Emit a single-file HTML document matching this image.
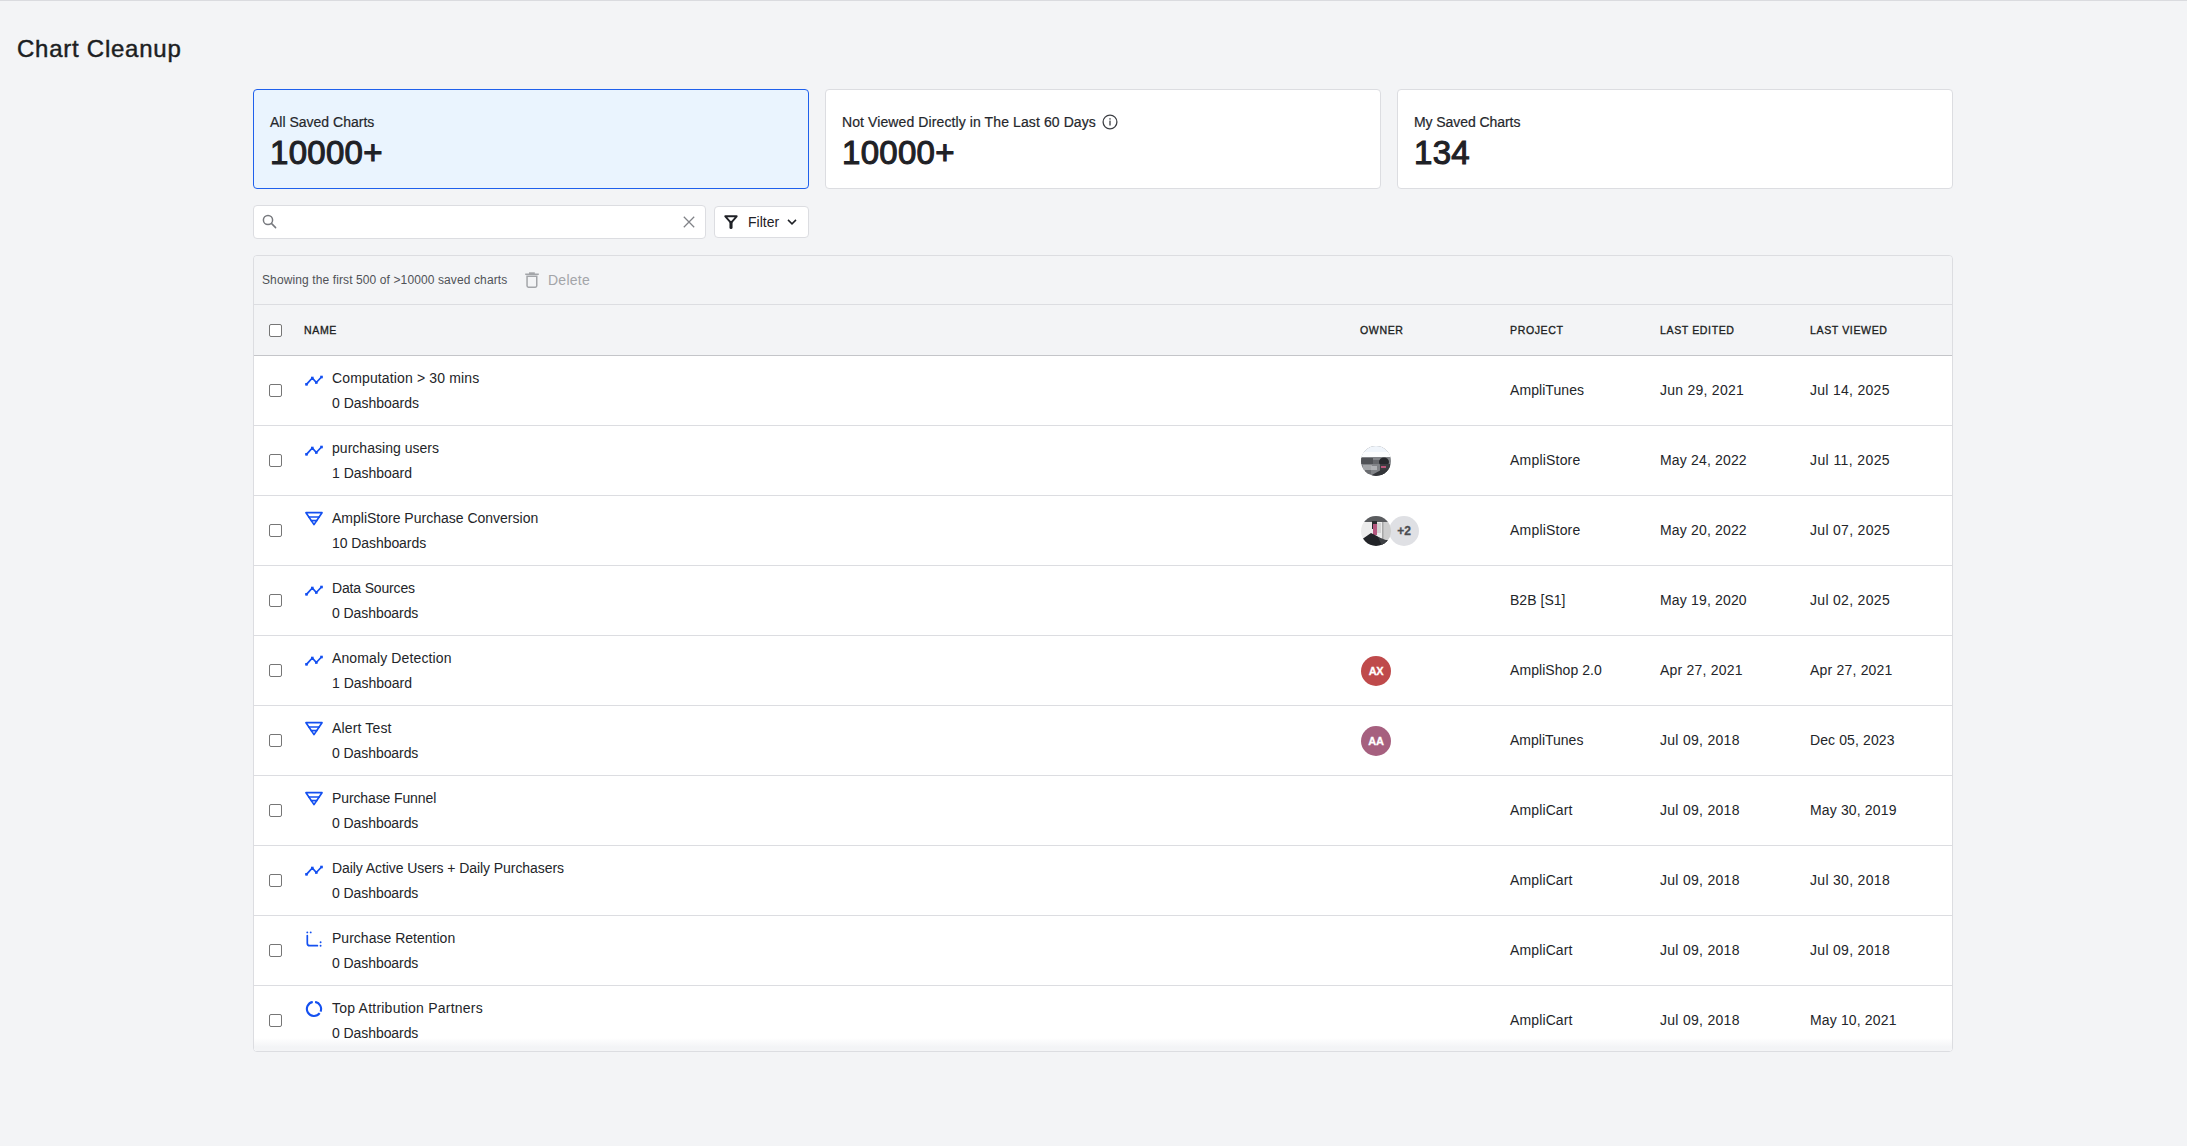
<!DOCTYPE html>
<html>
<head>
<meta charset="utf-8">
<style>
*{box-sizing:border-box;}
html,body{margin:0;padding:0;}
body{width:2187px;height:1146px;overflow:hidden;background:#f3f4f6;position:relative;font-family:"Liberation Sans",sans-serif;color:#232529;}

.abs{position:absolute;}
.t{position:absolute;white-space:nowrap;line-height:16px;}
.topline{left:0;top:0;width:2187px;height:1px;background:#dadbdf;}
.title{left:17px;top:35px;font-size:24px;line-height:28px;letter-spacing:0.75px;color:#1c1e22;-webkit-text-stroke:0.45px #1c1e22;}
.card{position:absolute;top:89px;width:556px;height:100px;background:#fff;border:1px solid #dcdde1;border-radius:4px;}
.card.sel{background:#eaf4fe;border-color:#1f60ec;}
.card .lbl{position:absolute;left:16px;top:24px;font-size:14px;line-height:16px;color:#25272c;-webkit-text-stroke:0.2px #25272c;white-space:nowrap;}
.card .num{position:absolute;left:16px;top:44px;font-size:33px;line-height:37px;font-weight:normal;letter-spacing:0.3px;color:#1f2126;-webkit-text-stroke:1.1px #1f2126;white-space:nowrap;}
.info{position:absolute;left:276px;top:24px;width:16px;height:16px;}
.search{left:253px;top:205px;width:453px;height:34px;background:#fff;border:1px solid #dcdde1;border-radius:4px;}
.sic{position:absolute;left:6px;top:6px;width:20px;height:20px;}
.xic{position:absolute;left:429px;top:10px;width:12px;height:12px;}
.filter{left:714px;top:206px;width:95px;height:32px;background:#fff;border:1px solid #dcdde1;border-radius:4px;}
.fic{position:absolute;left:9px;top:8px;width:14px;height:14px;}
.ftxt{position:absolute;left:33px;top:7px;font-size:14px;line-height:16px;color:#1f2126;}
.chev{position:absolute;left:72px;top:12px;width:10px;height:6px;}
.table{left:253px;top:255px;width:1700px;height:797px;border:1px solid #dcdde1;border-radius:4px;overflow:hidden;background:#f3f4f6;}
.toolbar{position:absolute;left:0;top:0;width:1698px;height:49px;border-bottom:1px solid #dcdde1;background:#f3f4f6;}
.show{position:absolute;left:8px;top:17px;font-size:12px;line-height:14px;letter-spacing:0.11px;color:#505257;white-space:nowrap;}
.trash{position:absolute;left:271px;top:16px;width:14px;height:16px;}
.del{position:absolute;left:294px;top:16px;font-size:14px;line-height:16px;letter-spacing:0.25px;color:#a3a5a9;white-space:nowrap;}
.thead{position:absolute;left:0;top:49px;width:1698px;height:51px;border-bottom:1px solid #c4c5c9;background:#f3f4f6;}
.row{position:absolute;left:0;width:1698px;height:70px;border-bottom:1px solid #dcdde1;background:#fff;}
.th{position:absolute;top:18px;font-size:11.5px;line-height:14px;letter-spacing:0.65px;color:#1c1e22;-webkit-text-stroke:0.35px #1c1e22;white-space:nowrap;transform:scaleX(0.92);transform-origin:0 0;}
.cb{position:absolute;width:13px;height:13px;border:1px solid #767676;border-radius:2px;background:#fff;}
.row .n1{position:absolute;left:78px;top:14px;font-size:14px;line-height:16px;white-space:nowrap;}
.row .n2{position:absolute;left:78px;top:39px;font-size:14px;line-height:16px;white-space:nowrap;}
.row .c{position:absolute;top:26px;font-size:14px;line-height:16px;white-space:nowrap;}
.row .ic{position:absolute;left:51px;top:15px;width:22px;height:22px;}
.fade{position:absolute;left:0;bottom:0;width:1698px;height:13px;background:linear-gradient(to bottom,rgba(243,244,246,0) 0px,#f3f4f6 9px,#f3f4f6 13px);}
.av{position:absolute;top:20px;width:30px;height:30px;border-radius:50%;color:#fff;font-weight:bold;font-size:11px;line-height:30px;text-align:center;letter-spacing:-0.3px;-webkit-text-stroke:0.3px #fff;}
.av.more{background:#dfe0e4;color:#4a4c51;letter-spacing:0;font-size:12px;-webkit-text-stroke:0.3px #4a4c51;}
.avs{position:absolute;top:20px;width:30px;height:30px;}
.ph1{background:linear-gradient(to bottom,#e9eef6 0,#dfe5ee 28%,#6d6f72 34%,#8a8c8f 50%,#4e5054 72%,#2e3034 100%);}
.ph2{background:linear-gradient(to right,#f2f2f2 0,#d9d9d9 30%,#5a5555 45%,#d8d8d8 62%,#9c9c9c 100%);overflow:hidden;}
.ph2::after{content:"";position:absolute;left:0;bottom:0;width:30px;height:13px;background:#26282c;}

</style>
</head>
<body>
<div class="abs topline"></div>
<div class="t title">Chart Cleanup</div>

<div class="card sel" style="left:253px;">
  <div class="lbl">All Saved Charts</div>
  <div class="num">10000+</div>
</div>
<div class="card" style="left:825px;">
  <div class="lbl" style="letter-spacing:0.1px;">Not Viewed Directly in The Last 60 Days</div>
  <svg class="info" viewBox="0 0 16 16"><circle cx="8" cy="8" r="6.9" fill="none" stroke="#3d3f44" stroke-width="1.3"/><rect x="7.35" y="6.6" width="1.3" height="4.9" fill="#3d3f44"/><rect x="7.35" y="4.2" width="1.3" height="1.4" fill="#3d3f44"/></svg>
  <div class="num">10000+</div>
</div>
<div class="card" style="left:1397px;">
  <div class="lbl" style="letter-spacing:-0.07px;">My Saved Charts</div>
  <div class="num">134</div>
</div>

<div class="abs search">
  <svg class="sic" viewBox="0 0 20 20"><circle cx="8" cy="8" r="4.6" fill="none" stroke="#77797e" stroke-width="1.5"/><line x1="11.4" y1="11.4" x2="15.6" y2="15.6" stroke="#77797e" stroke-width="1.5" stroke-linecap="round"/></svg>
  <svg class="xic" viewBox="0 0 12 12"><path d="M0.8 0.8L11.2 11.2M11.2 0.8L0.8 11.2" stroke="#808287" stroke-width="1.25" fill="none"/></svg>
</div>
<div class="abs filter">
  <svg class="fic" viewBox="0 0 14 14"><path d="M1.3 1.3H12.7L7 7.8Z" fill="none" stroke="#1f2126" stroke-width="1.9" stroke-linejoin="round"/><path d="M7 7.4V12.4" stroke="#1f2126" stroke-width="3.1" stroke-linecap="round"/></svg>
  <div class="ftxt">Filter</div>
  <svg class="chev" viewBox="0 0 10 6"><path d="M1 0.9L5 4.9L9 0.9" fill="none" stroke="#1f2126" stroke-width="1.5"/></svg>
</div>

<div class="abs table">
  <div class="toolbar">
    <div class="show">Showing the first 500 of &gt;10000 saved charts</div>
    <svg class="trash" viewBox="0 0 14 16"><path d="M0.2 2.3H13.8" stroke="#a3a5a9" stroke-width="1.6"/><rect x="4" y="0.3" width="5.8" height="1.8" fill="#a3a5a9"/><path d="M2.05 4.2V13.8Q2.05 15.2 3.45 15.2H10.35Q11.75 15.2 11.75 13.8V4.2Z" fill="none" stroke="#a3a5a9" stroke-width="1.5"/></svg>
    <div class="del">Delete</div>
  </div>
  <div class="thead">
    <div class="cb" style="left:15px;top:19px;"></div>
    <div class="th" style="left:50px;">NAME</div>
    <div class="th" style="left:1106px;">OWNER</div>
    <div class="th" style="left:1256px;">PROJECT</div>
    <div class="th" style="left:1406px;">LAST EDITED</div>
    <div class="th" style="left:1556px;">LAST VIEWED</div>
  </div>
<div class="row" style="top:100px;"><div class="cb" style="left:15px;top:28px;"></div><svg class="ic" viewBox="0 0 22 22"><polyline points="1.5,13.3 7.3,7.0 11.3,11.5 16.5,6.0" fill="none" stroke="#1450f0" stroke-width="1.8" stroke-linejoin="round" stroke-linecap="round"/><g fill="#1450f0"><rect x="0.2" y="12" width="2.6" height="2.6"/><rect x="6.0" y="5.7" width="2.6" height="2.6"/><rect x="10.0" y="10.2" width="2.6" height="2.6"/><rect x="15.2" y="4.7" width="2.6" height="2.6"/></g></svg><div class="n1" style="letter-spacing:0.140px;">Computation &gt; 30 mins</div><div class="n2" style="letter-spacing:-0.018px;">0 Dashboards</div><div class="c" style="left:1256px;letter-spacing:0.067px;">AmpliTunes</div><div class="c" style="left:1406px;letter-spacing:0.255px;">Jun 29, 2021</div><div class="c" style="left:1556px;letter-spacing:0.291px;">Jul 14, 2025</div></div>
<div class="row" style="top:170px;"><div class="cb" style="left:15px;top:28px;"></div><svg class="ic" viewBox="0 0 22 22"><polyline points="1.5,13.3 7.3,7.0 11.3,11.5 16.5,6.0" fill="none" stroke="#1450f0" stroke-width="1.8" stroke-linejoin="round" stroke-linecap="round"/><g fill="#1450f0"><rect x="0.2" y="12" width="2.6" height="2.6"/><rect x="6.0" y="5.7" width="2.6" height="2.6"/><rect x="10.0" y="10.2" width="2.6" height="2.6"/><rect x="15.2" y="4.7" width="2.6" height="2.6"/></g></svg><div class="n1" style="letter-spacing:0.027px;">purchasing users</div><div class="n2" style="letter-spacing:-0.020px;">1 Dashboard</div><svg class="avs" style="left:1107px;" viewBox="0 0 30 30"><defs><clipPath id="c1"><circle cx="15" cy="15" r="15"/></clipPath></defs><g clip-path="url(#c1)"><rect width="30" height="30" fill="#818387"/><rect width="30" height="11" fill="#f0f5fb"/><rect y="6" width="30" height="5" fill="#fbfcfd"/><rect x="0" y="12" width="12" height="6" fill="#505256"/><rect x="12" y="14" width="7" height="4" fill="#66686c"/><rect x="2" y="19" width="9" height="5" fill="#a3a5a8"/><rect x="10" y="20" width="6" height="4" fill="#b0b2b5"/><rect x="4" y="24" width="6" height="4" fill="#6a6c70"/><ellipse cx="23" cy="16" rx="5" ry="4.5" fill="#26282c"/><rect x="19" y="18" width="10" height="12" fill="#3c3e42"/><polygon points="9,30 20,24 30,23 30,30" fill="#333539"/><rect x="20" y="20" width="5" height="2" fill="#b85578"/></g></svg><div class="c" style="left:1256px;letter-spacing:0.200px;">AmpliStore</div><div class="c" style="left:1406px;letter-spacing:0.164px;">May 24, 2022</div><div class="c" style="left:1556px;letter-spacing:0.400px;">Jul 11, 2025</div></div>
<div class="row" style="top:240px;"><div class="cb" style="left:15px;top:28px;"></div><svg class="ic" viewBox="0 0 22 22"><g fill="none" stroke="#1450f0" stroke-width="1.7" stroke-linejoin="round" stroke-linecap="round"><polygon points="1.0,1.7 17.0,1.7 9.0,13.6"/><line x1="3.9" y1="6.0" x2="14.1" y2="6.0"/><line x1="6.3" y1="9.6" x2="11.7" y2="9.6"/></g></svg><div class="n1" style="letter-spacing:0.000px;">AmpliStore Purchase Conversion</div><div class="n2" style="letter-spacing:-0.067px;">10 Dashboards</div><div class="av more" style="left:1135px;">+2</div><svg class="avs" style="left:1107px;" viewBox="0 0 30 30"><defs><clipPath id="c2"><circle cx="15" cy="15" r="15"/></clipPath></defs><g clip-path="url(#c2)"><rect width="30" height="30" fill="#ececec"/><rect width="30" height="6" fill="#5a5c5f"/><rect x="22" y="6" width="8" height="24" fill="#cdcdcd"/><rect x="21.3" y="6" width="1" height="24" fill="#8c8c8c"/><rect x="11" y="5" width="5" height="8" fill="#2a2b2e"/><rect x="12" y="8" width="4" height="11" fill="#b4567e"/><rect x="16" y="7" width="4" height="10" fill="#d2d2d2"/><polygon points="0,24 10,17 16,20 22,24 30,24 30,30 0,30" fill="#222428"/><polygon points="17,21 30,26 30,30 21,30" fill="#3d3f43"/></g></svg><div class="c" style="left:1256px;letter-spacing:0.200px;">AmpliStore</div><div class="c" style="left:1406px;letter-spacing:0.164px;">May 20, 2022</div><div class="c" style="left:1556px;letter-spacing:0.309px;">Jul 07, 2025</div></div>
<div class="row" style="top:310px;"><div class="cb" style="left:15px;top:28px;"></div><svg class="ic" viewBox="0 0 22 22"><polyline points="1.5,13.3 7.3,7.0 11.3,11.5 16.5,6.0" fill="none" stroke="#1450f0" stroke-width="1.8" stroke-linejoin="round" stroke-linecap="round"/><g fill="#1450f0"><rect x="0.2" y="12" width="2.6" height="2.6"/><rect x="6.0" y="5.7" width="2.6" height="2.6"/><rect x="10.0" y="10.2" width="2.6" height="2.6"/><rect x="15.2" y="4.7" width="2.6" height="2.6"/></g></svg><div class="n1" style="letter-spacing:-0.164px;">Data Sources</div><div class="n2" style="letter-spacing:-0.073px;">0 Dashboards</div><div class="c" style="left:1256px;letter-spacing:0.029px;">B2B [S1]</div><div class="c" style="left:1406px;letter-spacing:0.164px;">May 19, 2020</div><div class="c" style="left:1556px;letter-spacing:0.309px;">Jul 02, 2025</div></div>
<div class="row" style="top:380px;"><div class="cb" style="left:15px;top:28px;"></div><svg class="ic" viewBox="0 0 22 22"><polyline points="1.5,13.3 7.3,7.0 11.3,11.5 16.5,6.0" fill="none" stroke="#1450f0" stroke-width="1.8" stroke-linejoin="round" stroke-linecap="round"/><g fill="#1450f0"><rect x="0.2" y="12" width="2.6" height="2.6"/><rect x="6.0" y="5.7" width="2.6" height="2.6"/><rect x="10.0" y="10.2" width="2.6" height="2.6"/><rect x="15.2" y="4.7" width="2.6" height="2.6"/></g></svg><div class="n1" style="letter-spacing:0.125px;">Anomaly Detection</div><div class="n2" style="letter-spacing:-0.020px;">1 Dashboard</div><div class="av" style="left:1107px;background:#bf4a4b;">AX</div><div class="c" style="left:1256px;letter-spacing:0.067px;">AmpliShop 2.0</div><div class="c" style="left:1406px;letter-spacing:0.218px;">Apr 27, 2021</div><div class="c" style="left:1556px;letter-spacing:0.200px;">Apr 27, 2021</div></div>
<div class="row" style="top:450px;"><div class="cb" style="left:15px;top:28px;"></div><svg class="ic" viewBox="0 0 22 22"><g fill="none" stroke="#1450f0" stroke-width="1.7" stroke-linejoin="round" stroke-linecap="round"><polygon points="1.0,1.7 17.0,1.7 9.0,13.6"/><line x1="3.9" y1="6.0" x2="14.1" y2="6.0"/><line x1="6.3" y1="9.6" x2="11.7" y2="9.6"/></g></svg><div class="n1" style="letter-spacing:0.156px;">Alert Test</div><div class="n2" style="letter-spacing:-0.073px;">0 Dashboards</div><div class="av" style="left:1107px;background:#a6607f;">AA</div><div class="c" style="left:1256px;letter-spacing:0.000px;">AmpliTunes</div><div class="c" style="left:1406px;letter-spacing:0.291px;">Jul 09, 2018</div><div class="c" style="left:1556px;letter-spacing:0.109px;">Dec 05, 2023</div></div>
<div class="row" style="top:520px;"><div class="cb" style="left:15px;top:28px;"></div><svg class="ic" viewBox="0 0 22 22"><g fill="none" stroke="#1450f0" stroke-width="1.7" stroke-linejoin="round" stroke-linecap="round"><polygon points="1.0,1.7 17.0,1.7 9.0,13.6"/><line x1="3.9" y1="6.0" x2="14.1" y2="6.0"/><line x1="6.3" y1="9.6" x2="11.7" y2="9.6"/></g></svg><div class="n1" style="letter-spacing:-0.114px;">Purchase Funnel</div><div class="n2" style="letter-spacing:-0.073px;">0 Dashboards</div><div class="c" style="left:1256px;letter-spacing:0.125px;">AmpliCart</div><div class="c" style="left:1406px;letter-spacing:0.291px;">Jul 09, 2018</div><div class="c" style="left:1556px;letter-spacing:0.145px;">May 30, 2019</div></div>
<div class="row" style="top:590px;"><div class="cb" style="left:15px;top:28px;"></div><svg class="ic" viewBox="0 0 22 22"><polyline points="1.5,13.3 7.3,7.0 11.3,11.5 16.5,6.0" fill="none" stroke="#1450f0" stroke-width="1.8" stroke-linejoin="round" stroke-linecap="round"/><g fill="#1450f0"><rect x="0.2" y="12" width="2.6" height="2.6"/><rect x="6.0" y="5.7" width="2.6" height="2.6"/><rect x="10.0" y="10.2" width="2.6" height="2.6"/><rect x="15.2" y="4.7" width="2.6" height="2.6"/></g></svg><div class="n1" style="letter-spacing:-0.072px;">Daily Active Users + Daily Purchasers</div><div class="n2" style="letter-spacing:-0.073px;">0 Dashboards</div><div class="c" style="left:1256px;letter-spacing:0.125px;">AmpliCart</div><div class="c" style="left:1406px;letter-spacing:0.291px;">Jul 09, 2018</div><div class="c" style="left:1556px;letter-spacing:0.309px;">Jul 30, 2018</div></div>
<div class="row" style="top:660px;"><div class="cb" style="left:15px;top:28px;"></div><svg class="ic" viewBox="0 0 22 22"><path d="M2.3 4.6V12.2Q2.3 14.7 4.8 14.7H12.4" fill="none" stroke="#1450f0" stroke-width="1.7" stroke-linecap="round"/><g fill="#1450f0"><circle cx="2.3" cy="1.4" r="0.95"/><circle cx="5.7" cy="1.4" r="0.95"/><circle cx="15.6" cy="11.3" r="0.95"/><circle cx="15.6" cy="14.7" r="0.95"/></g></svg><div class="n1" style="letter-spacing:0.012px;">Purchase Retention</div><div class="n2" style="letter-spacing:-0.073px;">0 Dashboards</div><div class="c" style="left:1256px;letter-spacing:0.125px;">AmpliCart</div><div class="c" style="left:1406px;letter-spacing:0.291px;">Jul 09, 2018</div><div class="c" style="left:1556px;letter-spacing:0.309px;">Jul 09, 2018</div></div>
<div class="row" style="top:730px;"><div class="cb" style="left:15px;top:28px;"></div><svg class="ic" viewBox="0 0 22 22"><g fill="none" stroke="#1450f0" stroke-width="2.1"><path d="M10.11 0.89A7.1 7.1 0 0 1 15.58 10.56"/><path d="M14.67 12.17A7.1 7.1 0 1 1 7.77 0.91"/></g></svg><div class="n1" style="letter-spacing:0.226px;">Top Attribution Partners</div><div class="n2" style="letter-spacing:-0.073px;">0 Dashboards</div><div class="c" style="left:1256px;letter-spacing:0.125px;">AmpliCart</div><div class="c" style="left:1406px;letter-spacing:0.291px;">Jul 09, 2018</div><div class="c" style="left:1556px;letter-spacing:0.145px;">May 10, 2021</div></div>
  <div class="fade"></div>
</div>
</body>
</html>
